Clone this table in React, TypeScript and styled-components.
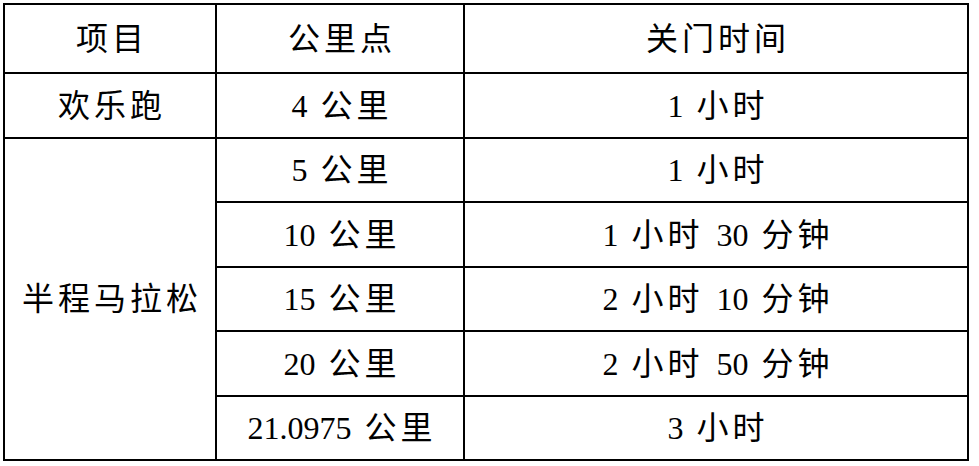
import React from "react";
import styled, { createGlobalStyle } from "styled-components";

const GlobalStyle = createGlobalStyle`
  html, body {
    margin: 0;
    padding: 0;
    background: #ffffff;
  }
  body {
    font-family: "Liberation Serif", "Noto Sans CJK SC", serif;
    color: #000000;
  }
`;

const Page = styled.main`
  padding: 3px 0 0 3px;
`;

/* the black background shows through the gaps as the rule lines */
const Table = styled.div`
  display: grid;
  grid-template-columns: 210px 246px 502px;
  grid-template-rows: 67px 63px 62px 63px 62px 63px 62px;
  gap: 2px;
  padding: 2px;
  width: max-content;
  background: #000000;
`;

const Cell = styled.div<{ $span?: number }>`
  background: #ffffff;
  display: flex;
  align-items: center;
  justify-content: center;
  grid-row: ${(p) => (p.$span ? `span ${p.$span}` : "auto")};
`;

const Text = styled.span`
  font-family: "Liberation Serif", "Noto Sans CJK SC", serif;
  font-size: 32px;
  font-weight: 400;
  letter-spacing: 4px;
  word-spacing: 1px;
  padding-left: 4px;
  line-height: 1;
  white-space: pre;
`;

const Num = styled.span`
  letter-spacing: 0;
`;

const rows = [
  { dist: ["5", "公里"], close: [["1", "小时"]] },
  { dist: ["10", "公里"], close: [["1", "小时"], ["30", "分钟"]] },
  { dist: ["15", "公里"], close: [["2", "小时"], ["10", "分钟"]] },
  { dist: ["20", "公里"], close: [["2", "小时"], ["50", "分钟"]] },
  { dist: ["21.0975", "公里"], close: [["3", "小时"]] },
];

function Amount({ parts }: { parts: string[][] }) {
  return (
    <Text>
      {parts.map(([n, unit], i) => (
        <React.Fragment key={i}>
          {i > 0 && " "}
          <Num>{n}</Num>
          {" "}
          {unit}
        </React.Fragment>
      ))}
    </Text>
  );
}

export default function App() {
  return (
    <>
      <GlobalStyle />
      <Page>
        <Table>
          <Cell><Text>项目</Text></Cell>
          <Cell><Text>公里点</Text></Cell>
          <Cell><Text>关门时间</Text></Cell>

          <Cell><Text>欢乐跑</Text></Cell>
          <Cell>
            <Amount parts={[["4", "公里"]]} />
          </Cell>
          <Cell>
            <Amount parts={[["1", "小时"]]} />
          </Cell>

          <Cell $span={5}><Text>半程马拉松</Text></Cell>
          {rows.map((r) => (
            <React.Fragment key={r.dist[0]}>
              <Cell>
                <Amount parts={[r.dist]} />
              </Cell>
              <Cell>
                <Amount parts={r.close} />
              </Cell>
            </React.Fragment>
          ))}
        </Table>
      </Page>
    </>
  );
}
